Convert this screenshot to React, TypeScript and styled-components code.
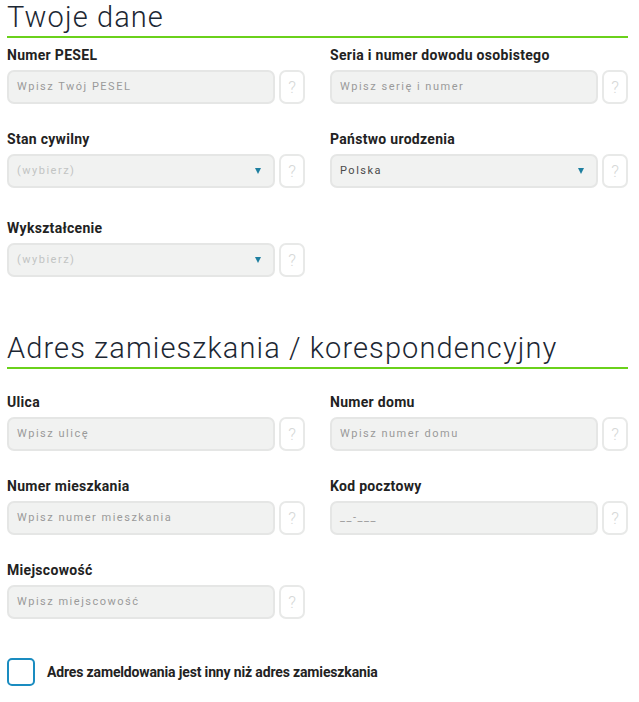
import React from 'react';
import styled, { createGlobalStyle } from 'styled-components';

const GlobalStyle = createGlobalStyle`
  body {
    margin: 0;
    background: #ffffff;
    font-family: Roboto, "Liberation Sans", Arial, sans-serif;
  }
`;

const Page = styled.div`
  width: 621px;
  padding: 0 0 0 7px;
`;

const Section = styled.section<{ $top: number }>`
  margin-top: ${({ $top }) => $top}px;
`;

const SectionTitle = styled.h2<{ $gap: number }>`
  margin: 0 0 ${({ $gap }) => $gap}px 0;
  padding-bottom: 2px;
  font-size: 29px;
  line-height: 34px;
  font-weight: 300;
  letter-spacing: 1.1px;
  color: #1c2733;
  border-bottom: 2px solid #6ad11b;
`;

const FieldGrid = styled.div`
  display: grid;
  grid-template-columns: 298px 298px;
  column-gap: 25px;
  row-gap: 27px;
`;

const Field = styled.div<{ $extra?: number }>`
  display: flex;
  flex-direction: column;
  margin-top: ${({ $extra }) => $extra || 0}px;
`;

const Label = styled.label`
  font-size: 14px;
  line-height: 16px;
  font-weight: 700;
  letter-spacing: 0.3px;
  color: #222222;
  margin-bottom: 7px;
`;

const InputRow = styled.div`
  display: flex;
  gap: 4px;
`;

const Box = styled.div`
  box-sizing: border-box;
  width: 268px;
  height: 34px;
  background: #f1f2f1;
  border: 2px solid #e5e6e5;
  border-radius: 7px;
  display: flex;
  align-items: center;
  padding: 0 8px;
`;

const Placeholder = styled.span<{ $tone: 'muted' | 'faint' | 'value' }>`
  font-size: 11px;
  line-height: 14px;
  letter-spacing: 1.5px;
  color: ${({ $tone }) =>
    $tone === 'faint' ? '#c2c4c3' : $tone === 'value' ? '#4a4a4a' : '#9a9a9a'};
  flex: 1;
  white-space: nowrap;
  margin-top: -1px;
`;

const Arrow = styled.span`
  width: 0;
  height: 0;
  margin-right: 4px;
  border-left: 3.5px solid transparent;
  border-right: 3.5px solid transparent;
  border-top: 6px solid #1e7fa0;
`;

const Help = styled.div`
  box-sizing: border-box;
  width: 26px;
  height: 34px;
  border: 2px solid #e8e9e8;
  border-radius: 7px;
  background: #ffffff;
  display: flex;
  align-items: center;
  justify-content: center;
  font-size: 17px;
  font-weight: 300;
  color: #d6d8d7;
`;

const CheckRow = styled.label`
  display: flex;
  align-items: center;
  gap: 12px;
  margin-top: 39px;
`;

const CheckBox = styled.span`
  box-sizing: border-box;
  width: 28px;
  height: 28px;
  border: 2px solid #1a8cc0;
  border-radius: 5px;
  background: #ffffff;
`;

const CheckText = styled.span`
  font-size: 14px;
  font-weight: 700;
  letter-spacing: -0.15px;
  color: #222222;
`;

type FieldDef = {
  label: string;
  text: string;
  tone?: 'muted' | 'faint' | 'value';
  select?: boolean;
  extra?: number;
};

const FormField: React.FC<FieldDef> = ({ label, text, tone = 'muted', select, extra }) => (
  <Field $extra={extra}>
    <Label>{label}</Label>
    <InputRow>
      <Box>
        <Placeholder $tone={tone}>{text}</Placeholder>
        {select && <Arrow />}
      </Box>
      <Help>?</Help>
    </InputRow>
  </Field>
);

const personal: FieldDef[] = [
  { label: 'Numer PESEL', text: 'Wpisz Twój PESEL' },
  { label: 'Seria i numer dowodu osobistego', text: 'Wpisz serię i numer' },
  { label: 'Stan cywilny', text: '(wybierz)', tone: 'faint', select: true },
  { label: 'Państwo urodzenia', text: 'Polska', tone: 'value', select: true },
  { label: 'Wykształcenie', text: '(wybierz)', tone: 'faint', select: true, extra: 5 },
];

const address: FieldDef[] = [
  { label: 'Ulica', text: 'Wpisz ulicę' },
  { label: 'Numer domu', text: 'Wpisz numer domu' },
  { label: 'Numer mieszkania', text: 'Wpisz numer mieszkania' },
  { label: 'Kod pocztowy', text: '__-___' },
  { label: 'Miejscowość', text: 'Wpisz miejscowość' },
];

const App: React.FC = () => (
  <>
    <GlobalStyle />
    <Page>
      <Section $top={0}>
        <SectionTitle $gap={9}>Twoje dane</SectionTitle>
        <FieldGrid>
          {personal.map((f) => (
            <FormField key={f.label} {...f} />
          ))}
        </FieldGrid>
      </Section>

      <Section $top={54}>
        <SectionTitle $gap={25}>Adres zamieszkania / korespondencyjny</SectionTitle>
        <FieldGrid>
          {address.map((f) => (
            <FormField key={f.label} {...f} />
          ))}
        </FieldGrid>
      </Section>

      <CheckRow>
        <CheckBox />
        <CheckText>Adres zameldowania jest inny niż adres zamieszkania</CheckText>
      </CheckRow>
    </Page>
  </>
);

export default App;
